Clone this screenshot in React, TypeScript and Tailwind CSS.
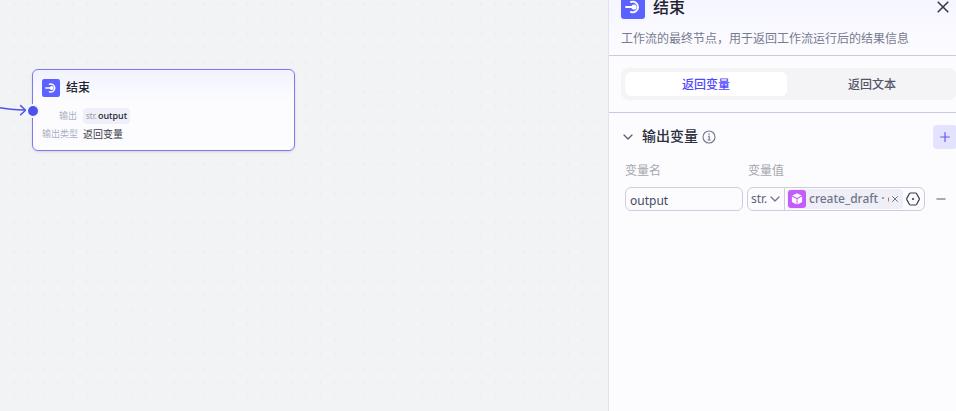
import { useState } from "react";

function EndIcon({ className }: { className: string }) {
  return (
    <svg viewBox="0 0 24 24" className={className} aria-hidden="true">
      <rect width="24" height="24" rx="3" fill="#5c62ff" />
      <path d="M10 7A5.3 5.3 0 1 1 10 17" fill="none" stroke="#fff" strokeWidth="1.9" strokeLinecap="round" />
      <path d="M5 12H13" stroke="#fff" strokeWidth="1.8" strokeLinecap="round" />
      <circle cx="13" cy="12" r="2.6" fill="#fff" />
    </svg>
  );
}

function CubeIcon() {
  return (
    <svg viewBox="0 0 18 18" className="size-[18px] shrink-0" aria-hidden="true">
      <rect width="18" height="18" rx="3" fill="#c45cfb" />
      <path d="M9 3.2 13.6 5.6 9 8 4.4 5.6Z" fill="#fff" />
      <path d="M3.9 6.5 8.5 8.9V14.6L3.9 12.1Z" fill="#fff" />
      <path d="M14.1 6.5 9.5 8.9V14.6L14.1 12.1Z" fill="#fff" />
    </svg>
  );
}

function Chevron({ className }: { className: string }) {
  return (
    <svg viewBox="0 0 10 10" className={className} fill="none" stroke="currentColor" strokeWidth="1.3" strokeLinecap="round" strokeLinejoin="round" aria-hidden="true">
      <path d="M1 3 5 7 9 3" />
    </svg>
  );
}

function Canvas() {
  return (
    <main className="relative min-w-0 flex-1 overflow-hidden bg-[#f1f3f5]">
      <svg className="absolute inset-0 size-full" aria-hidden="true">
        <defs>
          <pattern id="dots" x="7" y="-3.4" width="14.58" height="14.58" patternUnits="userSpaceOnUse">
            <circle cx="7.3" cy="7.3" r="0.9" fill="#e7e9ec" />
          </pattern>
        </defs>
        <rect width="100%" height="100%" fill="url(#dots)" />
        <path d="M0 107.8C8 109.4 16 109.8 25 110" fill="none" stroke="#4d53e8" strokeWidth="1.5" />
        <path d="M20.6 105.6 25.6 110.2 20.6 114.8" fill="none" stroke="#4d53e8" strokeWidth="1.5" strokeLinecap="round" strokeLinejoin="round" />
      </svg>
      <section className="absolute top-[69px] left-8 h-[82px] w-[263px] rounded-md border border-[#7f78f0] bg-linear-to-b from-[#f2f2ff] to-[#fcfcff] to-40% px-[9px] pt-2 shadow-sm">
        <div className="flex items-center gap-1.5">
          <EndIcon className="size-[18px]" />
          <h2 className="text-xs leading-5 font-medium text-[#22242e]">结束</h2>
        </div>
        <dl className="mt-2.5 grid grid-cols-[35px_1fr] items-center gap-x-1.5 gap-y-0.5">
          <dt className="text-right text-[9px] leading-4 whitespace-nowrap text-[#abb0c4]">输出</dt>
          <dd className="flex">
            <span className="flex h-4 items-center gap-px rounded-sm bg-[#eeeff8] px-[3px] text-[9px] leading-4 font-medium text-[#22242e]">
              <span className="text-[8px] font-normal text-[#9297ad]">str.</span>output
            </span>
          </dd>
          <dt className="text-right text-[9px] leading-4 whitespace-nowrap text-[#abb0c4]">输出类型</dt>
          <dd className="text-[10px] leading-4 text-[#3c3e4a]">返回变量</dd>
        </dl>
        <span className="absolute top-[34px] -left-[7px] size-3.5 rounded-full border-2 border-[#f5f5ff] bg-[#4d53e8]" />
      </section>
    </main>
  );
}

function Panel() {
  const [tab, setTab] = useState(0);
  const tabs = ["返回变量", "返回文本"];
  return (
    <aside className="w-[348px] shrink-0 overflow-hidden border-l border-[#e2e2f2] bg-[#fcfcff]">
      <div className="w-[348px]">
        <header className="border-b border-[#cacbe0] bg-linear-to-b from-[#f5f5ff] to-[#fcfcff] pb-1.5 pl-3">
          <div className="-mt-[5px] flex items-center gap-2 pr-2">
            <EndIcon className="size-6" />
            <h1 className="flex-1 text-base leading-6 font-medium text-[#22242e]">结束</h1>
            <button type="button" aria-label="关闭" className="text-[#383b4b]">
              <svg viewBox="0 0 12 12" className="size-3" fill="none" stroke="currentColor" strokeWidth="1.6" strokeLinecap="round" aria-hidden="true">
                <path d="M1.2 1.2 10.8 10.8M10.8 1.2 1.2 10.8" />
              </svg>
            </button>
          </div>
          <p className="mt-2.5 text-xs leading-5 text-[#777b90]">工作流的最终节点，用于返回工作流运行后的结果信息</p>
        </header>

        <div className="border-b border-[#c5c9e4] py-3 pl-3">
          <div className="flex gap-1 rounded-lg bg-[#f4f4f6] p-1">
            {tabs.map((label, i) => (
              <button
                key={label}
                type="button"
                aria-pressed={tab === i}
                onClick={() => setTab(i)}
                className={
                  tab === i
                    ? "h-6 flex-1 rounded-md bg-white pt-0.5 text-xs font-medium text-[#5147ff]"
                    : "h-6 flex-1 rounded-md pt-0.5 text-xs font-medium text-[#53566a]"
                }
              >
                {label}
              </button>
            ))}
          </div>
        </div>

        <section className="pt-3 pl-3">
          <div className="flex h-6 items-center pl-0.5">
            <Chevron className="size-2.5 text-[#5b5e72]" />
            <h2 className="ml-[9px] pb-0.5 text-sm leading-6 font-medium text-[#2c2e3b]">输出变量</h2>
            <svg viewBox="0 0 14 14" className="ml-1 size-3.5 text-[#72768c]" fill="none" stroke="currentColor" aria-hidden="true">
              <circle cx="7" cy="7" r="6" strokeWidth="1.1" />
              <path d="M5.9 6.2H7.2V10M5.6 10H8.7" strokeWidth="1.1" />
              <circle cx="7" cy="4" r="0.8" fill="currentColor" stroke="none" />
            </svg>
            <button type="button" aria-label="添加变量" className="ml-auto flex size-6 items-center justify-center rounded-sm bg-[#e3e3ff] text-[#6258ff]">
              <svg viewBox="0 0 10 10" className="size-2.5" fill="none" stroke="currentColor" strokeWidth="1.2" strokeLinecap="round" aria-hidden="true">
                <path d="M5 0.6V9.4M0.6 5H9.4" />
              </svg>
            </button>
          </div>

          <div className="mt-3 grid grid-cols-[118px_178px_1fr] gap-x-1 gap-y-1.5 pl-1">
            <label htmlFor="variable-name" className="text-xs leading-5 text-[#a5a7ae]">变量名</label>
            <label htmlFor="variable-type" className="col-span-2 pl-px text-xs leading-5 text-[#a5a7ae]">变量值</label>
            <input
              id="variable-name"
              defaultValue="output"
              className="h-6 w-full min-w-0 rounded-md border border-[#cccde0] bg-transparent px-1 pt-0.5 text-xs text-[#454a60] outline-none"
            />
            <div className="flex h-6 items-center rounded-md border border-[#cccde0]">
              <div className="relative h-full w-[37px] shrink-0 border-r border-[#cccde0]">
                <select id="variable-type" className="block h-full w-full appearance-none bg-transparent pb-px pl-[3px] text-xs leading-[18px] text-[#5f6378] outline-none">
                  <option>str.</option>
                </select>
                <Chevron className="pointer-events-none absolute top-[6px] right-1 size-2.5 text-[#72768c]" />
              </div>
              <div className="ml-0.5 flex h-5 w-[116px] items-center rounded-sm bg-[#efeff7] pl-px">
                <CubeIcon />
                <span className="ml-[3px] w-[80px] shrink-0 overflow-hidden text-xs leading-5 font-medium whitespace-nowrap text-[#72768a]">
                  create_draft · <span className="text-[#22242e]">d</span>
                </span>
                <button type="button" aria-label="清除变量" className="ml-0.5 text-[#72768c]">
                  <svg viewBox="0 0 8 8" className="size-2" fill="none" stroke="currentColor" aria-hidden="true">
                    <path d="M1.2 1.2 6.8 6.8M6.8 1.2 1.2 6.8" />
                  </svg>
                </button>
              </div>
              <button type="button" aria-label="变量设置" className="ml-[3px] text-[#383b4b]">
                <svg viewBox="0 0 14 14" className="size-3.5" fill="none" stroke="currentColor" strokeWidth="1.2" strokeLinejoin="round" aria-hidden="true">
                  <path d="M4.4 1H9.6Q10.2 1 10.5 1.5L13.2 6.4Q13.5 7 13.2 7.6L10.5 12.5Q10.2 13 9.6 13H4.4Q3.8 13 3.5 12.5L0.8 7.6Q0.5 7 0.8 6.4L3.5 1.5Q3.8 1 4.4 1Z" />
                  <circle cx="7" cy="7" r="1.1" fill="currentColor" stroke="none" />
                </svg>
              </button>
            </div>
            <button type="button" aria-label="删除变量" className="flex h-6 items-center pl-[7px] text-[#8b8e9c]">
              <svg viewBox="0 0 10 10" className="size-2.5" stroke="currentColor" strokeWidth="1.5" strokeLinecap="round" aria-hidden="true">
                <path d="M1 5H9" />
              </svg>
            </button>
          </div>
        </section>
      </div>
    </aside>
  );
}

export default function App() {
  return (
    <div className="flex h-screen overflow-hidden font-['Noto_Sans','Noto_Sans_CJK_SC',sans-serif]">
      <Canvas />
      <Panel />
    </div>
  );
}
